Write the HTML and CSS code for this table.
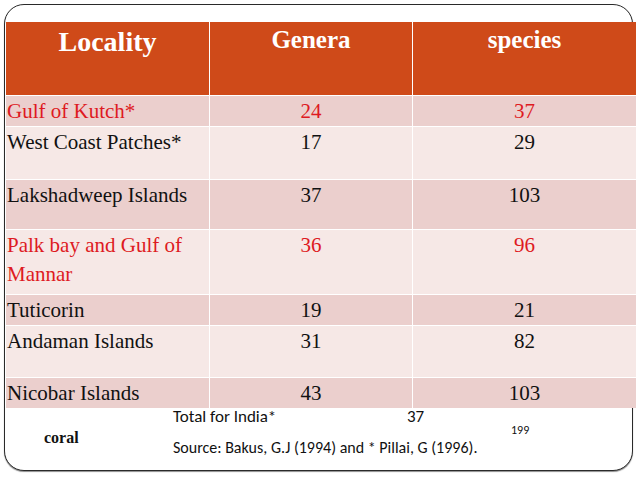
FILE: index.html
```html
<!DOCTYPE html>
<html lang="en">
<head>
<meta charset="utf-8">
<title>Coral genera and species in India</title>
<link rel="stylesheet" href="styles.css">
</head>
<body>
<div class="slide">
  <div class="grid">
    <div class="cell head"><span class="h-big">Locality</span></div>
    <div class="cell head num"><span class="h-small">Genera</span></div>
    <div class="cell head num"><span class="h-small">species</span></div>

    <div class="cell dark red">Gulf of Kutch*</div>
    <div class="cell dark red num">24</div>
    <div class="cell dark red num">37</div>

    <div class="cell light">West Coast Patches*</div>
    <div class="cell light num">17</div>
    <div class="cell light num">29</div>

    <div class="cell dark">Lakshadweep Islands</div>
    <div class="cell dark num">37</div>
    <div class="cell dark num">103</div>

    <div class="cell light red">Palk bay and Gulf of Mannar</div>
    <div class="cell light red num">36</div>
    <div class="cell light red num">96</div>

    <div class="cell dark">Tuticorin</div>
    <div class="cell dark num">19</div>
    <div class="cell dark num">21</div>

    <div class="cell light">Andaman Islands</div>
    <div class="cell light num">31</div>
    <div class="cell light num">82</div>

    <div class="cell dark">Nicobar Islands</div>
    <div class="cell dark num">43</div>
    <div class="cell dark num">103</div>
  </div>
  <div class="footer">
    <div class="coral">coral</div>
    <div class="notes">
      <div class="total"><span class="total-label">Total for India*</span><span class="total-num">37</span></div>
      <div class="small-num">199</div>
      <div class="source">Source: Bakus, G.J (1994) and * Pillai, G (1996).</div>
    </div>
  </div>
</div>
</body>
</html>
```

FILE: styles.css
```css
html, body {
  margin: 0;
  padding: 0;
  background: #ffffff;
}

body {
  width: 638px;
  height: 479px;
  overflow: hidden;
}

.slide {
  box-sizing: border-box;
  margin: 4px 0 0 4px;
  width: 629px;
  height: 467px;
  border: 1px solid #2a2a2a;
  border-radius: 20px;
  box-shadow: 0 1px 1px rgba(0, 0, 0, 0.45);
  background: #ffffff;
  padding: 17px 0 0 1px;
}

.grid {
  display: grid;
  width: 630px;
  grid-template-columns: 203px 202px 223px;
  grid-template-rows: 73px 30px 52px 49px 64px 30px 51px 30px;
  gap: 1px;
  background: #ffffff;
  font-family: "Liberation Serif", "Times New Roman", serif;
  font-size: 21px;
  line-height: 29px;
  color: #111111;
}

.cell {
  padding: 1px 0 0 1px;
  overflow: hidden;
}

.num {
  text-align: center;
  padding-left: 0;
}

.head {
  background: #cf4a19;
  color: #ffffff;
  font-weight: bold;
  text-align: center;
  line-height: 1;
  padding: 0;
}

.h-big {
  display: block;
  font-size: 28px;
  padding-top: 6px;
}

.h-small {
  display: block;
  font-size: 25px;
  padding-top: 5px;
}

.dark {
  background: #ebcfcd;
}

.light {
  background: #f6e8e6;
}

.red {
  color: #de1a22;
}

.footer {
  display: flex;
  font-family: Carlito, Calibri, Lato, "Liberation Sans", sans-serif;
  color: #111111;
}

.coral {
  width: 129px;
  padding: 22px 0 0 38px;
  font-family: "Liberation Serif", "Times New Roman", serif;
  font-weight: bold;
  font-size: 16px;
  line-height: 16px;
}

.notes {
  display: flex;
  flex-direction: column;
}

.total {
  display: flex;
  font-size: 17px;
  line-height: 18px;
}

.total-label {
  width: 234px;
}

.small-num {
  margin: -2px 0 0 338px;
  font-size: 12px;
  line-height: 12px;
}

.source {
  margin-top: 3px;
  font-size: 16px;
  line-height: 17px;
}
```
